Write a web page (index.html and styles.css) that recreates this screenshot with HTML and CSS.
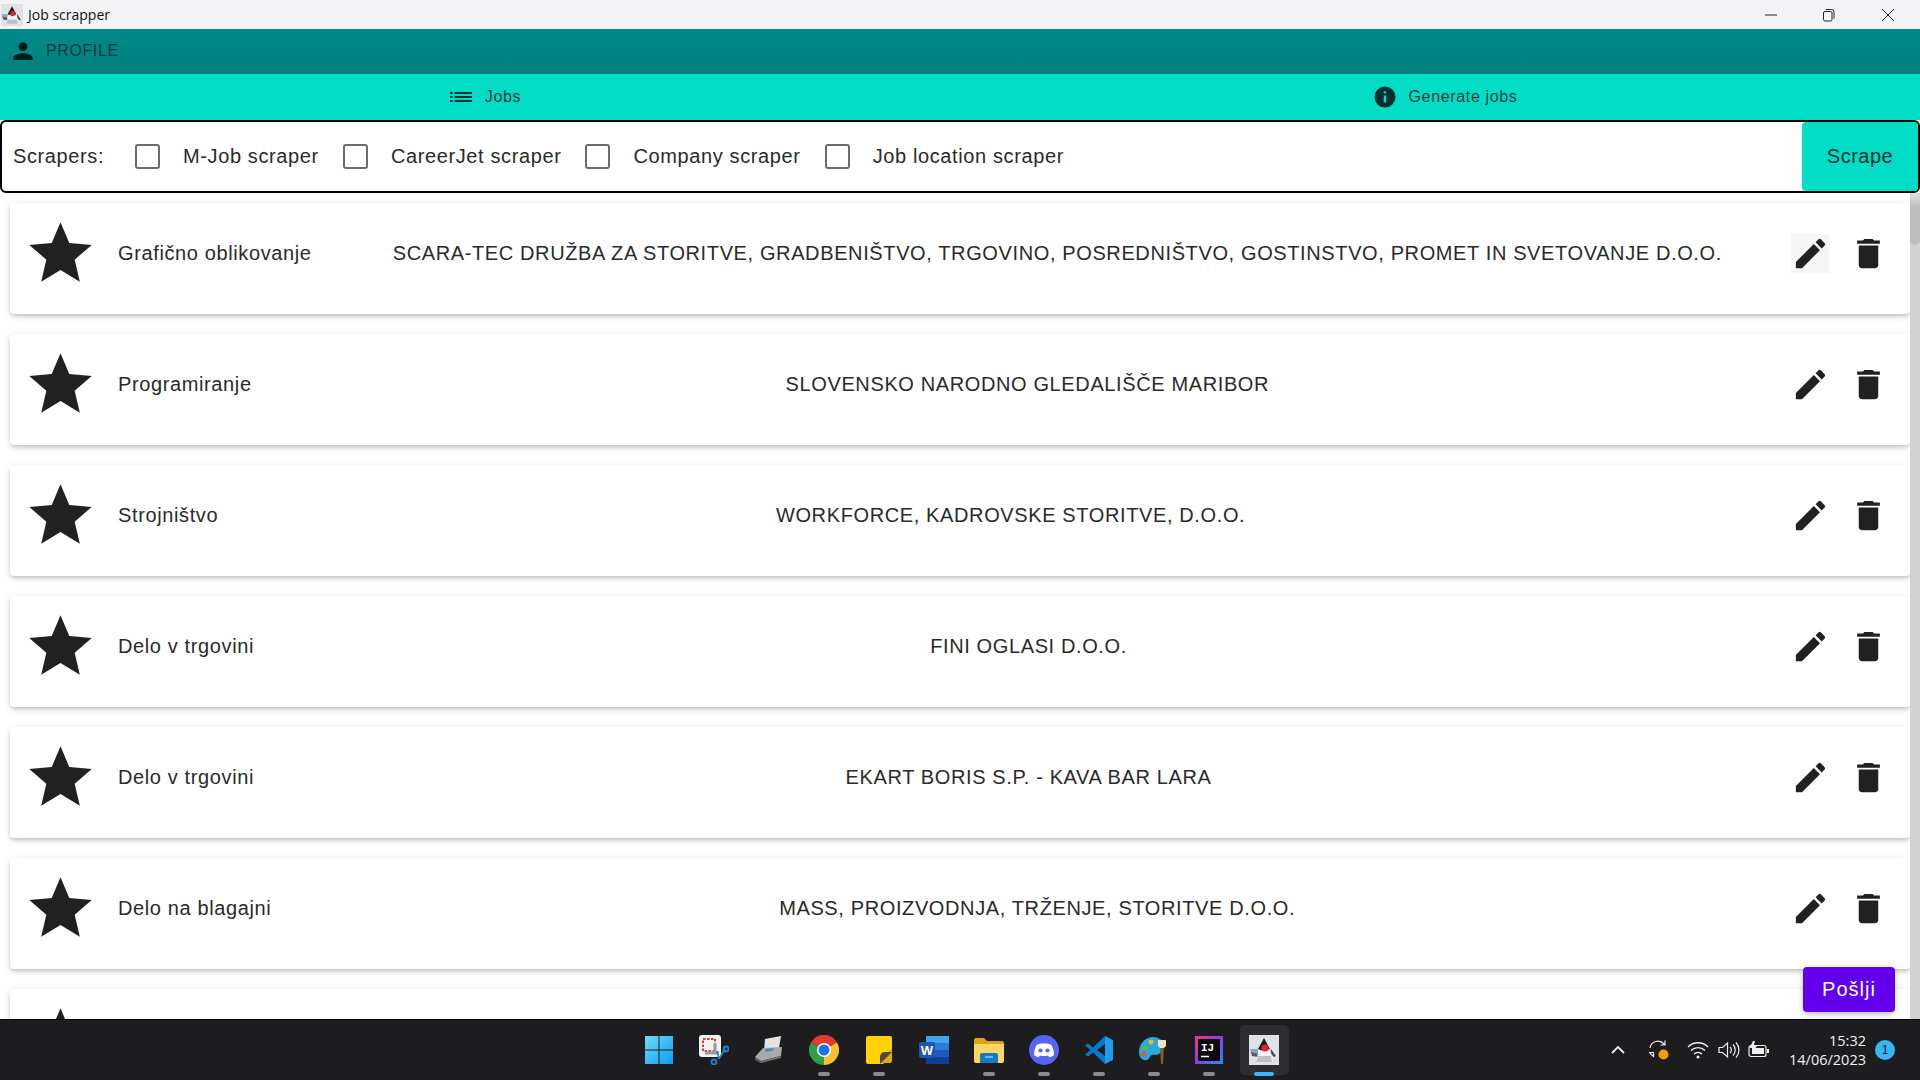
FILE: index.html
```html
<!DOCTYPE html>
<html lang="en">
<head>
  <meta charset="UTF-8" />
  <title>Job scrapper</title>
  <link rel="stylesheet" href="styles.css">
</head>
<body>
  <svg class="defs" width="0" height="0">
    <defs>
      <symbol id="star" viewBox="0 0 24 24"><path d="M12 17.27 18.18 21l-1.64-7.03L22 9.24l-7.19-.61L12 2 9.19 8.63 2 9.24l5.46 4.73L5.82 21z"/></symbol>
      <symbol id="edit" viewBox="0 0 24 24"><path d="M3 17.25V21h3.75L17.81 9.94l-3.75-3.75L3 17.25zM20.71 7.04a1 1 0 0 0 0-1.41l-2.34-2.34a1 1 0 0 0-1.41 0l-1.83 1.83 3.75 3.75 1.83-1.83z"/></symbol>
      <symbol id="trash" viewBox="0 0 24 24"><path d="M6 19c0 1.1.9 2 2 2h8c1.100 0 2-.9 2-2V7H6v12zM19 4h-3.500l-1-1h-5l-1 1H5v2h14V4z"/></symbol>
      <symbol id="duke" viewBox="0 0 30 30">
        <rect width="30" height="30" fill="#dfe3e8"/>
        <path d="M1 14h8v6H3z" fill="#7fa7c9"/>
        <path d="M2 17l7 2v3l-6-1z" fill="#55595e"/>
        <path d="M22 14l5 7-2 1-4-4z" fill="#4a4d52"/>
        <path d="M15 3 21 13l3 14H7l3-14z" fill="#f4f4f4"/>
        <path d="M15 3 21 14c-4 2-8 2-12 0z" fill="#1c1c20"/>
        <circle cx="16" cy="13" r="3.600" fill="#e0242c"/>
        <path d="M9 21h13l1 6H7z" fill="#bfc1c4"/>
      </symbol>
    </defs>
  </svg>

  <div class="titlebar">
    <svg class="title-icon"><use href="#duke"/></svg>
    <span class="title-text">Job scrapper</span>
    <div class="window-controls">
      <svg width="12" height="12" viewBox="0 0 12 12"><path d="M0 6h12" stroke="#222" fill="none"/></svg>
      <svg width="12" height="14" viewBox="0 0 12 14"><rect x=".5" y="3.500" width="8.500" height="9.500" rx="1.500" stroke="#222" fill="none"/><path d="M3 1.500h5.500a2.500 2.500 0 0 1 2.500 2.500v6.500" stroke="#222" fill="none"/></svg>
      <svg width="14" height="14" viewBox="0 0 14 14"><path d="M1 1l12 12M13 1 1 13" stroke="#222" fill="none"/></svg>
    </div>
  </div>

  <div class="profile-bar">
    <svg class="profile-icon" viewBox="0 0 24 24"><path d="M12 12a4.400 4.400 0 1 0 0-8.800 4.400 4.400 0 0 0 0 8.800zm0 2.200c-3 0-9.600 1.500-9.600 4.400V21h19.200v-2.400c0-2.900-6.600-4.400-9.600-4.400z"/></svg>
    <span>PROFILE</span>
  </div>

  <nav class="tabs">
    <div class="tab">
      <svg class="tab-icon" viewBox="0 0 24 24"><path d="M1 7h2.500v2H1zm0 4h2.500v2H1zm0 4h2.500v2H1zM5.500 7H23v2H5.500zm0 4H23v2H5.500zm0 4H23v2H5.500z"/></svg>
      <span>Jobs</span>
    </div>
    <div class="tab">
      <svg class="tab-icon" viewBox="0 0 24 24"><path d="M12 1.500a10.500 10.500 0 1 0 0 21 10.500 10.500 0 0 0 0-21zm1.200 16h-2.400v-7h2.400v7zm0-9h-2.400V6.200h2.400v2.300z"/></svg>
      <span>Generate jobs</span>
    </div>
  </nav>

  <div class="scraper-bar">
    <span class="scraper-label">Scrapers:</span>
    <label class="scraper"><span class="checkbox"></span>M-Job scraper</label>
    <label class="scraper"><span class="checkbox"></span>CareerJet scraper</label>
    <label class="scraper"><span class="checkbox"></span>Company scraper</label>
    <label class="scraper"><span class="checkbox"></span>Job location scraper</label>
    <button class="scrape-btn">Scrape</button>
  </div>

  <div class="content">
    <div class="job-list">
      <div class="job-card">
        <svg class="star"><use href="#star"/></svg>
        <span class="job-title">Grafično oblikovanje</span>
        <span class="job-company">SCARA-TEC DRUŽBA ZA STORITVE, GRADBENIŠTVO, TRGOVINO, POSREDNIŠTVO, GOSTINSTVO, PROMET IN SVETOVANJE D.O.O.</span>
        <div class="job-actions">
          <span class="action hovered"><svg><use href="#edit"/></svg></span>
          <span class="action"><svg><use href="#trash"/></svg></span>
        </div>
      </div>
      <div class="job-card">
        <svg class="star"><use href="#star"/></svg>
        <span class="job-title">Programiranje</span>
        <span class="job-company">SLOVENSKO NARODNO GLEDALIŠČE MARIBOR</span>
        <div class="job-actions">
          <span class="action"><svg><use href="#edit"/></svg></span>
          <span class="action"><svg><use href="#trash"/></svg></span>
        </div>
      </div>
      <div class="job-card">
        <svg class="star"><use href="#star"/></svg>
        <span class="job-title">Strojništvo</span>
        <span class="job-company">WORKFORCE, KADROVSKE STORITVE, D.O.O.</span>
        <div class="job-actions">
          <span class="action"><svg><use href="#edit"/></svg></span>
          <span class="action"><svg><use href="#trash"/></svg></span>
        </div>
      </div>
      <div class="job-card">
        <svg class="star"><use href="#star"/></svg>
        <span class="job-title">Delo v trgovini</span>
        <span class="job-company">FINI OGLASI D.O.O.</span>
        <div class="job-actions">
          <span class="action"><svg><use href="#edit"/></svg></span>
          <span class="action"><svg><use href="#trash"/></svg></span>
        </div>
      </div>
      <div class="job-card">
        <svg class="star"><use href="#star"/></svg>
        <span class="job-title">Delo v trgovini</span>
        <span class="job-company">EKART BORIS S.P. - KAVA BAR LARA</span>
        <div class="job-actions">
          <span class="action"><svg><use href="#edit"/></svg></span>
          <span class="action"><svg><use href="#trash"/></svg></span>
        </div>
      </div>
      <div class="job-card">
        <svg class="star"><use href="#star"/></svg>
        <span class="job-title">Delo na blagajni</span>
        <span class="job-company">MASS, PROIZVODNJA, TRŽENJE, STORITVE D.O.O.</span>
        <div class="job-actions">
          <span class="action"><svg><use href="#edit"/></svg></span>
          <span class="action"><svg><use href="#trash"/></svg></span>
        </div>
      </div>
      <div class="job-card">
        <svg class="star"><use href="#star"/></svg>
      </div>
    </div>
    <div class="scrollbar"><div class="scroll-thumb"></div></div>
    <button class="send-btn">Pošlji</button>
  </div>

  <footer class="taskbar">
    <div class="task-icons">
      <div class="task-item">
        <svg viewBox="0 0 30 30">
          <defs><linearGradient id="win" x1="0" y1="0" x2="1" y2="1"><stop offset="0" stop-color="#6fdcf8"/><stop offset="1" stop-color="#0f9af0"/></linearGradient></defs>
          <path d="M1 1h13.500v13.500H1zM15.500 1H29v13.500H15.500zM1 15.500h13.500V29H1zM15.500 15.500H29V29H15.500z" fill="url(#win)"/>
        </svg>
      </div>
      <div class="task-item">
        <svg viewBox="0 0 30 30">
          <rect x="0" y="0" width="22" height="22" rx="3" fill="#f2f2f2"/>
          <rect x="4" y="4" width="12" height="12" fill="none" stroke="#d8412f" stroke-width="2" stroke-dasharray="2.500 1.500"/>
          <path d="M16 8v10M6 18h14" stroke="#9a9a9a" stroke-width="3"/>
          <path d="M18 16l2 8M26 14l-6 10" stroke="#1a84d8" stroke-width="1.500"/>
          <circle cx="15" cy="27" r="2.500" fill="none" stroke="#1a84d8" stroke-width="1.800"/>
          <circle cx="27" cy="14" r="2.500" fill="none" stroke="#1a84d8" stroke-width="1.800"/>
        </svg>
      </div>
      <div class="task-item">
        <svg viewBox="0 0 30 30">
          <path d="M11 4 27 1l-2 12-15 3z" fill="#e4e4e4"/>
          <path d="M1 22 9 13l19-1-1 9-20 5z" fill="#a9a9a9"/>
          <path d="M1 22l6 4v2l-6-3z" fill="#5d5d5d"/>
          <path d="M7 26l20-5v2L7 28z" fill="#6f6f6f"/>
          <path d="M12 14l8-1-2 3-7 1z" fill="#3d8fc4"/>
        </svg>
      </div>
      <div class="task-item has-dot">
        <svg viewBox="0 0 30 30">
          <path d="M15 15 2 7.500A15 15 0 0 1 28 7.500Z" fill="#e33b2e"/>
          <path d="M15 15 28 7.500A15 15 0 0 1 15 30Z" fill="#fbc02d"/>
          <path d="M15 15 15 30A15 15 0 0 1 2 7.500Z" fill="#2e9e48"/>
          <circle cx="15" cy="15" r="7" fill="#fff"/>
          <circle cx="15" cy="15" r="5.500" fill="#1a73e8"/>
        </svg>
      </div>
      <div class="task-item has-dot">
        <svg viewBox="0 0 30 30">
          <path d="M2 3a2 2 0 0 1 2-2h22a2 2 0 0 1 2 2v17l-9 9H4a2 2 0 0 1-2-2z" fill="#fdd207"/>
          <path d="M28 14v12a2 2 0 0 1-2 2h-10l3-9 3-1z" fill="#e8a90a"/>
          <path d="M16 29v-7a5 5 0 0 1 5-5h7z" fill="#4a4a4a"/>
        </svg>
      </div>
      <div class="task-item">
        <svg viewBox="0 0 30 30">
          <rect x="7" y="1" width="23" height="28" rx="2" fill="#2b7cd3"/>
          <rect x="7" y="1" width="23" height="7" fill="#41a5ee"/>
          <rect x="7" y="15" width="23" height="7" fill="#185abd"/>
          <rect x="7" y="22" width="23" height="7" fill="#103f91"/>
          <rect x="0" y="7" width="16" height="16" rx="2" fill="#1e55b3"/>
          <text x="8" y="20" class="word-letter">W</text>
        </svg>
      </div>
      <div class="task-item has-dot">
        <svg viewBox="0 0 30 30">
          <path d="M0 5a2 2 0 0 1 2-2h8l3 3h15a2 2 0 0 1 2 2v3H0z" fill="#d9a415"/>
          <path d="M0 9h30v17a2 2 0 0 1-2 2H2a2 2 0 0 1-2-2z" fill="#fdd663"/>
          <path d="M6 20a2 2 0 0 1 2-2h14a2 2 0 0 1 2 2v8H6z" fill="#1379c9"/>
          <path d="M11 22h8" stroke="#8cc8f0" stroke-width="1.500"/>
        </svg>
      </div>
      <div class="task-item has-dot">
        <svg viewBox="0 0 30 30">
          <circle cx="15" cy="15" r="15" fill="#5865f2"/>
          <path d="M8 9.500c3-1.500 11-1.500 14 0 2 3 3 7 3 10.500-1.500 1.500-3.500 2-5 2l-1-1.500c-2.500.8-5.500.8-8 0L10 22c-1.500 0-3.500-.5-5-2 0-3.500 1-7.500 3-10.500z" fill="#fff"/>
          <circle cx="11.500" cy="15.500" r="2.100" fill="#5865f2"/>
          <circle cx="18.500" cy="15.500" r="2.100" fill="#5865f2"/>
        </svg>
      </div>
      <div class="task-item has-dot">
        <svg viewBox="0 0 30 30">
          <path d="M21 1 9 12.500 4 8.500 1 10.500 6.500 15 1 19.500l3 2 5-4L21 29v-8l-8-6 8-6z" fill="#0a78c8"/>
          <path d="M21 1l8 4v20l-8 4z" fill="#1f9cf0"/>
        </svg>
      </div>
      <div class="task-item has-dot">
        <svg viewBox="0 0 30 30">
          <path d="M14 2C6 2 0 9 0 17c0 6 4 9 8 8 3-1 2-4 5-5 3-1 6 1 8-2 2-3 5-5 4-9-1-4-6-7-11-7z" fill="#26a9dc"/>
          <circle cx="6" cy="13" r="2.500" fill="#6fb52c"/>
          <circle cx="12" cy="7" r="2.500" fill="#f7b519"/>
          <circle cx="5" cy="19" r="2.500" fill="#e2572b"/>
          <path d="M21 12l1 17h2l1-17z" fill="#8a5a2c"/>
          <path d="M19 5h8v6l-2 2h-4l-2-2z" fill="#efe2c4"/>
        </svg>
      </div>
      <div class="task-item has-dot">
        <svg viewBox="0 0 30 30">
          <defs><linearGradient id="ij" x1="0" y1="0" x2="1" y2="1"><stop offset="0" stop-color="#f0357a"/><stop offset=".5" stop-color="#8a3ff0"/><stop offset="1" stop-color="#1f8df0"/></linearGradient></defs>
          <rect x="1" y="1" width="28" height="28" fill="url(#ij)"/>
          <rect x="4" y="4" width="22" height="22" fill="#0b0b10"/>
          <text x="7" y="16" class="ij-letters">IJ</text>
          <path d="M7 21.500h8" stroke="#fff" stroke-width="1.500"/>
        </svg>
      </div>
      <div class="task-item active">
        <svg><use href="#duke"/></svg>
      </div>
    </div>
    <div class="tray">
      <svg class="tray-chevron" viewBox="0 0 14 10"><path d="M1 8l6-6 6 6" fill="none" stroke="#eee" stroke-width="1.800"/></svg>
      <svg class="tray-sync" viewBox="0 0 22 22">
        <path d="M2 9a8 8 0 0 1 14-4l1 1M17 1.500V6h-4.500M2 14v0a8 8 0 0 0 3 3l1 1M1 13.500H5.500V18" fill="none" stroke="#eee" stroke-width="1.200"/>
        <circle cx="15.500" cy="15.500" r="5" fill="#f59a0c"/>
      </svg>
      <svg class="tray-wifi" viewBox="0 0 22 18"><path d="M1 6a14 14 0 0 1 20 0M4 9.500a10 10 0 0 1 14 0M7 13a6 6 0 0 1 8 0" fill="none" stroke="#eee" stroke-width="1.400"/><circle cx="11" cy="16" r="1.500" fill="#eee"/></svg>
      <svg class="tray-volume" viewBox="0 0 22 18"><path d="M1 6.500h3.500L9.500 2v14l-5-4.500H1z" fill="none" stroke="#eee" stroke-width="1.200"/><path d="M12 6a4 4 0 0 1 0 6M15 3.500a8 8 0 0 1 0 11M18 1.500a11 11 0 0 1 0 15" fill="none" stroke="#eee" stroke-width="1.200"/></svg>
      <svg class="tray-battery" viewBox="0 0 22 18"><rect x="1" y="4.500" width="17" height="11" rx="2" fill="none" stroke="#eee" stroke-width="1.200"/><rect x="4" y="7" width="12" height="6" fill="#eee"/><path d="M19 8h2v4h-2z" fill="#eee"/><path d="M5 0 1.500 7H5l-1 5 5-7H5.500l1.500-5z" fill="#eee"/></svg>
      <div class="clock">
        <span>15:32</span>
        <span>14/06/2023</span>
      </div>
      <span class="notif-badge">1</span>
    </div>
  </footer>
</body>
</html>
```

FILE: styles.css
```css
/* Job scrapper window */
html, body {
  margin: 0;
  height: 100%;
}
body {
  width: 1920px;
  height: 1080px;
  display: flex;
  flex-direction: column;
  overflow: hidden;
  font-family: 'Liberation Sans', sans-serif;
  color: #212121;
  background: #fff;
}
.defs {
  position: absolute;
}

/* title bar */
.titlebar {
  height: 29px;
  flex: none;
  display: flex;
  align-items: center;
  background: #f3f2f5;
  font-family: 'Open Sans', sans-serif;
  font-size: 14px;
  color: #111;
}
.title-icon {
  width: 22px;
  height: 22px;
  margin-left: 1px;
  margin-right: 5px;
}
.window-controls {
  margin-left: auto;
  display: flex;
  align-items: center;
  gap: 46px;
  padding-right: 25px;
}

/* profile */
.profile-bar {
  height: 45px;
  flex: none;
  display: flex;
  align-items: center;
  background: linear-gradient(#008a8c, #00807f);
  font-size: 16px;
  letter-spacing: 0.6px;
  color: #06393a;
  padding-bottom: 2px;
  box-sizing: border-box;
}
.profile-icon {
  width: 24px;
  height: 24px;
  margin-left: 11px;
  margin-right: 11px;
  fill: #021a1a;
}

/* tabs */
.tabs {
  height: 46px;
  flex: none;
  display: flex;
  background: #00dcc6;
  font-size: 16px;
  letter-spacing: 0.65px;
  color: #05403a;
}
.tab {
  flex: 1;
  display: flex;
  align-items: center;
  justify-content: center;
  gap: 12px;
  padding-left: 10px;
  padding-bottom: 1px;
}
.tab-icon {
  width: 24px;
  height: 24px;
  fill: #02302c;
}

/* scrapers */
.scraper-bar {
  height: 73px;
  flex: none;
  box-sizing: border-box;
  display: flex;
  align-items: center;
  border: 2px solid #000;
  border-radius: 6px;
  padding-left: 11px;
  font-size: 20px;
  letter-spacing: 0.62px;
  color: #2a2a2a;
}
.scraper-label {
  width: 122px;
}
.scraper {
  display: flex;
  align-items: center;
  margin-right: 24px;
}
.checkbox {
  width: 25px;
  height: 25px;
  box-sizing: border-box;
  border: 2px solid #6c6c6c;
  border-radius: 3px;
  margin-right: 23px;
}
.scrape-btn {
  margin-left: auto;
  width: 116px;
  height: 69px;
  border: none;
  border-radius: 4px;
  background: #00dcc6;
  color: #06332f;
  font: inherit;
  letter-spacing: 0.5px;
}

/* job list */
.content {
  flex: 1;
  min-height: 0;
  display: flex;
  position: relative;
}
.job-list {
  flex: 1;
  min-width: 0;
  overflow: hidden;
  padding: 10px 0 0 10px;
  display: flex;
  flex-direction: column;
  gap: 20px;
}
.job-card {
  flex: none;
  height: 111px;
  box-sizing: border-box;
  display: flex;
  align-items: flex-start;
  padding: 13px 23px 0 13px;
  border-radius: 4px;
  background: #fff;
  box-shadow: 0 2px 4px -1px rgba(0,0,0,.2), 0 4px 5px rgba(0,0,0,.06), 0 1px 10px rgba(0,0,0,.08);
  font-size: 20px;
  letter-spacing: 0.62px;
  color: #2a2a2a;
}
.star {
  width: 75px;
  height: 75px;
  flex: none;
  fill: #212121;
  margin-right: 20px;
}
.job-title {
  flex: none;
  line-height: 74px;
}
.job-company {
  flex: 1;
  text-align: center;
  line-height: 74px;
  padding-left: 12px;
}
.job-actions {
  flex: none;
  display: flex;
  gap: 20px;
  margin-top: 18px;
}
.action {
  width: 38px;
  height: 39px;
  display: flex;
  align-items: center;
  justify-content: center;
}
.action svg {
  width: 39px;
  height: 39px;
  flex: none;
  fill: #212121;
}
.hovered {
  background: #f5f5f5;
}
.scrollbar {
  width: 10px;
  flex: none;
  background: #d2d2d2;
}
.scroll-thumb {
  height: 52px;
  border-radius: 5px;
  background: linear-gradient(#e4e4e4, #bdbdbd 14px);
}
.send-btn {
  position: absolute;
  left: 1803px;
  top: 774px;
  width: 92px;
  height: 45px;
  border: none;
  border-radius: 4px;
  background: #6200ee;
  color: #fff;
  font: inherit;
  font-size: 20px;
  letter-spacing: 1px;
  box-shadow: 0 3px 5px -1px rgba(0,0,0,.2), 0 1px 10px rgba(0,0,0,.12);
}

/* taskbar */
.taskbar {
  height: 61px;
  flex: none;
  box-sizing: border-box;
  border-top: 1px solid #000;
  background: #1d1d20;
  position: relative;
  display: flex;
  justify-content: center;
  padding-left: 3px;
}
.task-icons {
  display: flex;
  align-items: center;
  gap: 25px;
}
.task-item {
  width: 30px;
  height: 30px;
  position: relative;
}
.task-item svg {
  width: 30px;
  height: 30px;
  display: block;
}
.has-dot::after,
.active::after {
  content: "";
  position: absolute;
  left: 9px;
  top: 37px;
  width: 12px;
  height: 4px;
  border-radius: 2px;
  background: #8c8c8c;
}
.active::before {
  content: "";
  position: absolute;
  left: -9px;
  top: -10px;
  width: 49px;
  height: 50px;
  border-radius: 5px;
  background: #2c2c31;
}
.active svg {
  position: relative;
}
.active::after {
  left: 5px;
  width: 20px;
  background: #3fb4f5;
}
.word-letter {
  font-family: 'Liberation Sans', sans-serif;
  font-size: 13px;
  font-weight: bold;
  fill: #fff;
  text-anchor: middle;
}
.ij-letters {
  font-family: 'Liberation Mono', monospace;
  font-size: 11px;
  font-weight: bold;
  fill: #fff;
}

/* system tray */
.tray {
  position: absolute;
  right: 25px;
  top: 0;
  bottom: 0;
  display: flex;
  align-items: center;
  color: #f2f2f2;
}
.tray svg {
  flex: none;
}
.tray-chevron {
  width: 14px;
  height: 10px;
  margin-right: 23px;
}
.tray-sync {
  width: 22px;
  height: 22px;
  margin-right: 17px;
}
.tray-wifi {
  width: 22px;
  height: 18px;
  margin-right: 9px;
}
.tray-volume {
  width: 22px;
  height: 18px;
  margin-right: 8px;
}
.tray-battery {
  width: 22px;
  height: 20px;
  margin-right: 19px;
}
.clock {
  display: flex;
  flex-direction: column;
  align-items: flex-end;
  font-family: 'Open Sans', sans-serif;
  font-size: 14.500px;
  line-height: 19px;
  margin-right: 9px;
}
.notif-badge {
  width: 20px;
  height: 20px;
  border-radius: 50%;
  background: #3ab4f5;
  color: #10202c;
  font-size: 12px;
  text-align: center;
  line-height: 20px;
}
```
